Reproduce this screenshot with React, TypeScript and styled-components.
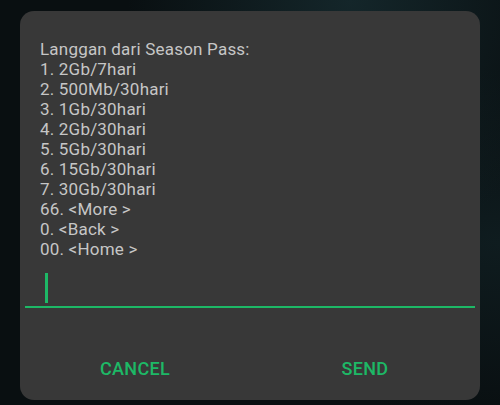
import React from 'react'
import styled, { createGlobalStyle } from 'styled-components'

const GlobalStyle = createGlobalStyle`
  html, body { margin:0; padding:0; width:500px; height:405px; overflow:hidden; }
  body { background:#0a1315; font-family:Roboto, "Noto Sans", sans-serif; }
`

const lines = [
  'Langgan dari Season Pass:',
  '1. 2Gb/7hari',
  '2. 500Mb/30hari',
  '3. 1Gb/30hari',
  '4. 2Gb/30hari',
  '5. 5Gb/30hari',
  '6. 15Gb/30hari',
  '7. 30Gb/30hari',
  '66. <More >',
  '0. <Back >',
  '00. <Home >',
]

export default function App() {
  return (
    <>
      <GlobalStyle />
      <Screen>
        <Dialog>
          <Message>
            {lines.map(l => <Line key={l}>{l}</Line>)}
          </Message>
          <Field>
            <Caret />
          </Field>
          <Actions>
            <ActionButton>CANCEL</ActionButton>
            <ActionButton>SEND</ActionButton>
          </Actions>
        </Dialog>
      </Screen>
    </>
  )
}

const Screen = styled.div`
  width:500px; height:405px; box-sizing:border-box; padding:11px 20px 5px;
  background:
    radial-gradient(ellipse at 70% 0%, #14262a 0%, transparent 45%),
    radial-gradient(ellipse at 100% 60%, #0f1c1f 0%, transparent 50%),
    #090f11;
`

const Dialog = styled.div`
  width:460px; height:389px; box-sizing:border-box; background:#383838; border-radius:14px;
  display:flex; flex-direction:column; padding-top:28px;
`

const Message = styled.div` padding:0 20px; display:flex; flex-direction:column; `
const Line = styled.div` font-size:17px; line-height:20px; color:#c6c6c6; white-space:pre; letter-spacing:0.2px; `

const Field = styled.div`
  margin:14px 5px 0; height:33px; border-bottom:2px solid #1db866;
  display:flex; align-items:flex-start; padding-left:20px;
`
const Caret = styled.div` width:2.5px; height:30px; background:#1db866; `

const Actions = styled.div` display:flex; margin-top:36px; `
const ActionButton = styled.div`
  flex:1; height:48px; display:flex; align-items:center; justify-content:center;
  color:#1db866; font-size:18px; font-weight:500; letter-spacing:0.3px;
`
